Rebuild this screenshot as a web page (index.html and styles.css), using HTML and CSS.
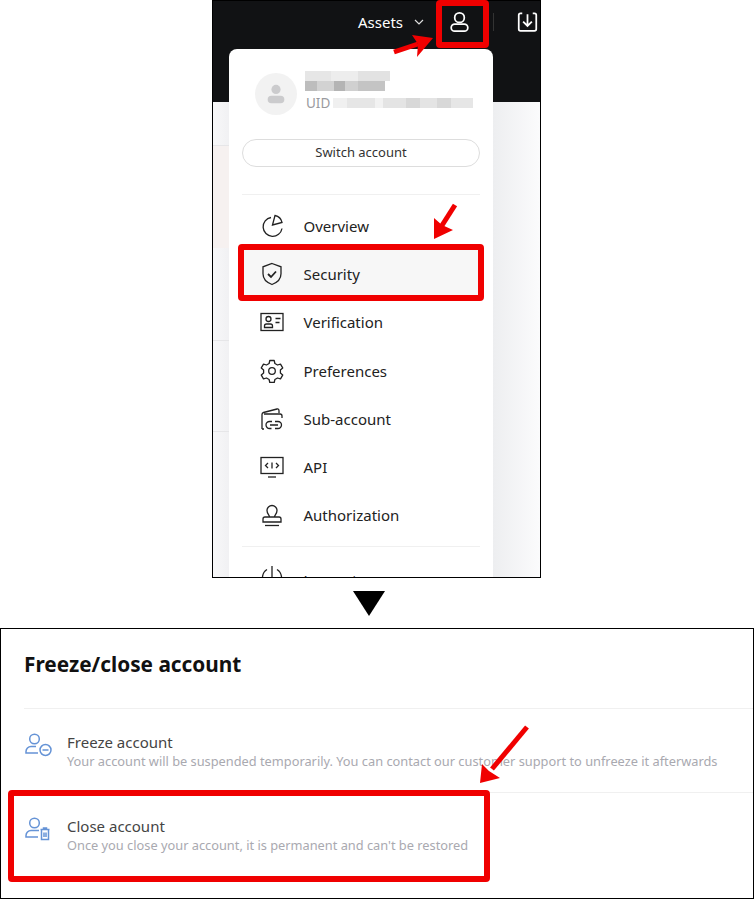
FILE: index.html
```html
<!DOCTYPE html>
<html lang="en">
<head>
  <meta charset="UTF-8">
  <title>Freeze/close account</title>
  <link rel="stylesheet" href="styles.css">
</head>
<body>
  <div class="page">
    <div class="shot-top">
      <header class="topbar">
        <span class="assets">Assets</span>
        <svg class="chevron" viewBox="0 0 12 12"><path d="M2 4l4 4 4-4"/></svg>
        <svg class="bar-icon" viewBox="0 0 24 24"><circle cx="12" cy="7" r="5.500"/><rect x="2.500" y="14.500" width="19" height="8" rx="4"/></svg>
        <span class="bar-sep"></span>
        <svg class="bar-icon" viewBox="0 0 24 24"><path d="M6 2H4a2 2 0 0 0-2 2v16a2 2 0 0 0 2 2h16a2 2 0 0 0 2-2V4a2 2 0 0 0-2-2h-2"/><path d="M12 3v13M7 11.500l5 5 5-5"/></svg>
      </header>
      <div class="backdrop">
        <i class="faint faint-a"></i>
        <i class="faint faint-b"></i>
        <i class="faint faint-c"></i>
        <i class="pink"></i>
      </div>

      <div class="menu">
        <div class="profile">
          <div class="avatar">
            <svg viewBox="0 0 24 24"><circle cx="12" cy="6.500" r="5.500"/><rect x="2" y="14" width="20" height="9" rx="4.500"/></svg>
          </div>
          <div class="who">
            <span class="blur blur-name"></span>
            <span class="blur blur-mail"></span>
            <div class="uid">UID<span class="blur blur-uid"></span></div>
          </div>
        </div>
        <button class="switch">Switch account</button>
        <nav class="links">
          <a class="link">
            <svg viewBox="0 0 24 24"><path d="M11 3.500a9.500 9.500 0 1 0 11 11"/><path d="M12.500 11L15 1.500a9 9 0 0 1 7 7z"/></svg>
            Overview
          </a>
          <a class="link link-on">
            <svg viewBox="0 0 24 24"><path d="M12 1.500l9 3.300v7c0 5-3.500 8.700-9 10.700-5.500-2-9-5.700-9-10.700v-7z"/><path class="check" d="M8 12l3 3 5-5.500"/></svg>
            Security
          </a>
          <a class="link">
            <svg viewBox="0 0 24 24"><rect x="1" y="3.500" width="22" height="17"/><circle cx="8.500" cy="9" r="2.500"/><path d="M4.500 17.500v-1.500a2 2 0 0 1 2-2h4a2 2 0 0 1 2 2v1.500z"/><path d="M15.500 8.500h5M15.500 12.500h4"/></svg>
            Verification
          </a>
          <a class="link">
            <svg viewBox="0 0 24 24"><circle cx="12" cy="12" r="3.300"/><path d="M9.800 1.500h4.400l.7 3 2.600 1.500 3-.9 2.200 3.800-2.300 2.100v3l2.300 2.100-2.200 3.800-3-.9-2.600 1.500-.7 3H9.800l-.7-3-2.600-1.500-3 .9-2.200-3.800 2.300-2.100v-3L1.300 8.900l2.200-3.800 3 .9 2.600-1.500z" stroke-linejoin="round"/></svg>
            Preferences
          </a>
          <a class="link">
            <svg viewBox="0 0 24 24"><path d="M2 22V7.500a2 2 0 0 1 1.500-2L17 2c1.500-.3 2 .5 2 2v2"/><path d="M4 7h16a2 2 0 0 1 2 2v2"/><path d="M4 22H2"/><path d="M12 14.500H9.500a3.500 3.500 0 0 0 0 7h2M15 14.500h3a3.500 3.500 0 0 1 0 7h-3M10 18h8"/></svg>
            Sub-account
          </a>
          <a class="link">
            <svg viewBox="0 0 24 24"><rect x="1" y="2.500" width="22" height="16"/><path d="M8 22h8"/><path d="M8 8l-2.500 2.500L8 13M16 8l2.500 2.500L16 13M12 7.500v6"/></svg>
            API
          </a>
          <a class="link">
            <svg viewBox="0 0 24 24"><path d="M9.500 14c0-2-2.500-3-2.500-6.500a5 5 0 0 1 10 0c0 3.500-2.500 4.500-2.500 6.500"/><path d="M3 19v-3a2 2 0 0 1 2-2h14a2 2 0 0 1 2 2v3z"/><path d="M5 22.500h14"/></svg>
            Authorization
          </a>
        </nav>
        <a class="link link-out">
          <svg viewBox="0 0 24 24"><path d="M12 1v11M7 4.500a9.500 9.500 0 1 0 10 0"/></svg>
          Log out
        </a>
      </div>
    </div>

    <div class="down-mark"><i class="triangle"></i></div>

    <section class="shot-bottom">
      <h2 class="panel-title">Freeze/close account</h2>
      <div class="option">
        <svg class="option-icon" viewBox="0 0 27 24"><circle cx="9.500" cy="6" r="4.800"/><path d="M11 13.500H6a5 5 0 0 0-5 5v1.500h12"/><circle cx="20.500" cy="17" r="5.500"/><path d="M17.500 17h6"/></svg>
        <div>
          <div class="option-name">Freeze account</div>
          <div class="option-note">Your account will be suspended temporarily. You can contact our customer support to unfreeze it afterwards</div>
        </div>
      </div>
      <div class="option">
        <svg class="option-icon" viewBox="0 0 27 24"><circle cx="9.500" cy="6" r="4.800"/><path d="M14 13.500H6a5 5 0 0 0-5 5v1.500h12"/><path d="M15.500 12.500h9M18.500 12.500v-1.500h3v1.500M16.500 12.500v10h7v-10M19 15.500v4.500M21 15.500v4.500"/></svg>
        <div>
          <div class="option-name">Close account</div>
          <div class="option-note">Once you close your account, it is permanent and can't be restored</div>
        </div>
      </div>
    </section>

    <svg class="callouts" viewBox="0 0 754 899">
      <rect x="439" y="3" width="47" height="42" rx="1"/>
      <rect x="241" y="247" width="240" height="51" rx="1"/>
      <rect x="11" y="793" width="476" height="86" rx="1"/>
      <path d="M394 52L418 44"/>
      <polygon points="433,38 412,35 418,44 417,57"/>
      <path d="M455 205L441 227"/>
      <polygon points="434,239 434,218 442,225 453,230"/>
      <path d="M527 727L492 769"/>
      <polygon points="480,783 482,764 489,771 500,778"/>
    </svg>
  </div>
</body>
</html>
```

FILE: styles.css
```css
* {
  box-sizing: border-box;
}
body {
  margin: 0;
  background: #fff;
  font-family: "Noto Sans", "Liberation Sans", sans-serif;
}
.page {
  position: relative;
  width: 754px;
  height: 899px;
  overflow: hidden;
}

/* top screenshot */
.shot-top {
  position: relative;
  margin-left: 212px;
  width: 329px;
  height: 578px;
  border: 1px solid #000;
  overflow: hidden;
  background: #fff;
}
.topbar {
  display: flex;
  align-items: center;
  height: 101px;
  padding: 0 0 59px 145px;
  background: #111214;
  color: #fff;
}
.assets {
  font-size: 15px;
}
.chevron {
  width: 12px;
  height: 12px;
  margin-left: 10px;
  fill: none;
  stroke: #ddd;
  stroke-width: 1.2;
}
.bar-icon {
  width: 21px;
  height: 22px;
  margin-left: 24px;
  fill: none;
  stroke: #fff;
  stroke-width: 2;
}
.bar-sep {
  width: 1px;
  height: 18px;
  margin-left: 23px;
  background: #333;
}
.bar-icon:last-child {
  width: 21px;
  margin-left: 23px;
}
.backdrop {
  position: relative;
  height: 476px;
  background: linear-gradient(90deg, #f8f8f9 0, #f1f1f3 16px, #fff 16px, #fff 280px, #edeef0 280px, #fbfbfc 326px);
}
.faint {
  position: absolute;
  left: 0;
  width: 16px;
  height: 1px;
  background: #e6e6e8;
}
.faint-a { top: 43px; }
.faint-b { top: 238px; }
.faint-c { top: 329px; }
.pink {
  position: absolute;
  top: 44px;
  left: 0;
  width: 16px;
  height: 102px;
  background: #f6f1f0;
}

/* account menu */
.menu {
  position: absolute;
  top: 48px;
  left: 16px;
  width: 264px;
  padding: 0 13px;
  background: #fff;
  border-radius: 8px 8px 0 0;
}
.profile {
  display: flex;
  gap: 8px;
  height: 90px;
  padding: 22px 13px 0;
}
.avatar {
  display: flex;
  align-items: center;
  justify-content: center;
  flex: none;
  width: 42px;
  height: 42px;
  margin-top: 2px;
  border-radius: 50%;
  background: #f2f2f2;
}
.avatar svg {
  width: 20px;
  height: 22px;
  fill: #cbcbcd;
}
.who {
  width: 168px;
}
.blur {
  display: block;
  height: 10px;
  background: #e9e9e9;
}
.blur-name {
  width: 85px;
  background: linear-gradient(90deg, #e6e6e6 0 30%, #ededed 30% 62%, #e2e2e2 62% 100%);
}
.blur-mail {
  width: 80px;
  background: linear-gradient(90deg, #bdbdbd 0 15%, #d2d2d2 15% 36%, #b4b4b4 36% 50%, #d0d0d0 50% 66%, #c4c4c4 66% 100%);
}
.uid {
  display: flex;
  align-items: center;
  gap: 3px;
  margin: 2px 0 0 1px;
  font-size: 13.500px;
  line-height: 20px;
  color: #9a9a9e;
}
.blur-uid {
  width: 140px;
  background: linear-gradient(90deg, #f0f0f0 0 10%, #e6e6e6 10% 30%, #f2f2f2 30% 36%, #e4e4e4 36% 52%, #d8d8d8 52% 62%, #e4e4e4 62% 74%, #d8d8d8 74% 84%, #e6e6e6 84% 100%);
}
.switch {
  display: block;
  width: 238px;
  height: 28px;
  padding: 0 0 2px;
  border: 1px solid #ddd;
  border-radius: 14px;
  background: #fff;
  font: 13px "Noto Sans", "Liberation Sans", sans-serif;
  color: #333;
}
.links {
  margin-top: 27px;
  padding: 6.500px 0 6.300px;
  border-top: 1px solid #f0f0f0;
  border-bottom: 1px solid #f0f0f0;
}
.link {
  display: flex;
  align-items: center;
  gap: 19.500px;
  height: 48.300px;
  padding-left: 18px;
  font-size: 15px;
  color: #222;
}
.link svg {
  flex: none;
  width: 24px;
  height: 24px;
  fill: none;
  stroke: #222;
  stroke-width: 1.3;
}
.link svg .check {
  stroke-width: 1.8;
}
.link-on {
  background: #f7f7f7;
}
.link-out {
  margin-top: 9px;
}
.link-out svg {
  margin-bottom: 6px;
}

/* arrow between the screenshots */
.down-mark {
  display: flex;
  justify-content: center;
  height: 50px;
  padding: 13px 16px 0 0;
}
.triangle {
  width: 0;
  height: 0;
  border-left: 16px solid transparent;
  border-right: 16px solid transparent;
  border-top: 25px solid #000;
}

/* bottom screenshot */
.shot-bottom {
  height: 271px;
  border: 1px solid #000;
}
.panel-title {
  height: 79px;
  margin: 0 0 0 23px;
  padding-top: 20px;
  font-size: 20.800px;
  line-height: 30px;
  font-weight: 700;
  color: #111;
}
.option {
  display: flex;
  gap: 15px;
  height: 84px;
  margin: 0 0 0 23px;
  padding: 24px 0 0 1px;
  border-top: 1px solid #f0f0f0;
}
.option-icon {
  flex: none;
  width: 27px;
  height: 24px;
  fill: none;
  stroke: #6593d6;
  stroke-width: 1.500;
}
.option-name {
  font-size: 15px;
  line-height: 19px;
  color: #444;
}
.option-note {
  font-size: 12.800px;
  line-height: 19px;
  color: #a9a9b0;
  white-space: nowrap;
}

/* red annotations */
.callouts {
  position: absolute;
  top: 0;
  left: 0;
  width: 754px;
  height: 899px;
}
.callouts rect {
  fill: none;
  stroke: #f00000;
  stroke-width: 6;
}
.callouts path {
  fill: none;
  stroke: #f00000;
  stroke-width: 5;
}
.callouts polygon {
  fill: #f00000;
}
```
